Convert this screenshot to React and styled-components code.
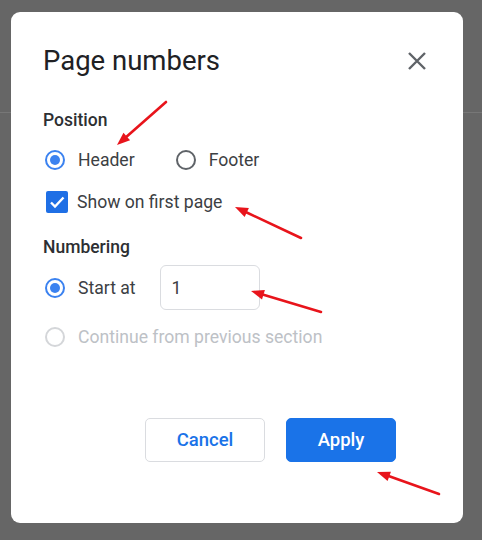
import React from "react";
import styled, { createGlobalStyle } from "styled-components";

const GlobalStyle = createGlobalStyle`
  html, body { margin: 0; padding: 0; }
  body {
    width: 482px;
    height: 540px;
    overflow: hidden;
    background: linear-gradient(#666666 0 112px, #777777 112px 113px, #666666 113px);
    font-family: Roboto, "Liberation Sans", Arial, sans-serif;
  }
`;

const Page = styled.div`
  position: relative;
  width: 482px;
  height: 540px;
  padding: 12px 0 0 11px;
  box-sizing: border-box;
`;

const Dialog = styled.div`
  width: 452px;
  height: 511px;
  box-sizing: border-box;
  background: #ffffff;
  border-radius: 9px;
  padding: 33px 34px 0 32px;
  display: flex;
  flex-direction: column;
`;

const TitleRow = styled.div`
  display: flex;
  align-items: center;
  justify-content: space-between;
  height: 32px;
`;

const Title = styled.h1`
  margin: 0;
  font-size: 27.5px;
  line-height: 32px;
  font-weight: 400;
  color: #202124;
`;

const CloseButton = styled.button`
  width: 24px;
  height: 24px;
  padding: 0;
  border: 0;
  background: none;
  display: flex;
  align-items: center;
  justify-content: center;
  color: #5f6368;
`;

const SectionLabel = styled.div`
  margin-top: ${(p) => p.$top}px;
  font-size: 17.5px;
  line-height: 24px;
  font-weight: 500;
  color: #2d2f32;
`;

const Row = styled.div`
  display: flex;
  align-items: center;
  margin-top: ${(p) => p.$top}px;
  min-height: 24px;
`;

const Option = styled.label`
  display: flex;
  align-items: center;
  gap: ${(p) => p.$gap || 13}px;
  margin-right: ${(p) => p.$space || 0}px;
  font-size: 17.6px;
  line-height: 24px;
  color: ${(p) => (p.$disabled ? "#bdc1c6" : "#3c4043")};
`;

const RadioCircle = styled.span`
  width: 20px;
  height: 20px;
  box-sizing: border-box;
  border-radius: 50%;
  border: 2px solid
    ${(p) => (p.$disabled ? "#d4d6d9" : p.$checked ? "#3b82f0" : "#5f6368")};
  display: flex;
  align-items: center;
  justify-content: center;
  margin-left: 2px;

  &::after {
    content: "";
    width: 10px;
    height: 10px;
    border-radius: 50%;
    background: #3b82f0;
    display: ${(p) => (p.$checked ? "block" : "none")};
  }
`;

const CheckBox = styled.span`
  width: 22px;
  height: 22px;
  border-radius: 2px;
  background: #1f6fe5;
  display: flex;
  align-items: center;
  justify-content: center;
  margin-left: 3px;
`;

const NumberInput = styled.div`
  width: 100px;
  height: 45px;
  box-sizing: border-box;
  border: 1px solid #dadce0;
  border-radius: 6px;
  margin-left: 24px;
  padding-left: 11px;
  display: flex;
  align-items: center;
  font-size: 17.6px;
  color: #3c4043;
`;

const Actions = styled.div`
  display: flex;
  gap: 21px;
  margin-top: 69px;
  padding-left: 102px;
`;

const Button = styled.button`
  height: 44px;
  width: ${(p) => p.$w}px;
  box-sizing: border-box;
  border-radius: 5px;
  font-family: Roboto, "Liberation Sans", Arial, sans-serif;
  font-size: 18.5px;
  font-weight: 500;
  border: 1px solid ${(p) => (p.$primary ? "#1a73e8" : "#dadce0")};
  background: ${(p) => (p.$primary ? "#1a73e8" : "#ffffff")};
  color: ${(p) => (p.$primary ? "#ffffff" : "#1a73e8")};
  padding: 0;
`;

const Annotations = styled.svg`
  position: absolute;
  left: 0;
  top: 0;
  pointer-events: none;
`;

function Arrow({ x1, y1, x2, y2 }) {
  const ang = Math.atan2(y2 - y1, x2 - x1);
  const len = 13;
  const half = 5;
  const bx = x2 - len * Math.cos(ang);
  const by = y2 - len * Math.sin(ang);
  const px = -Math.sin(ang) * half;
  const py = Math.cos(ang) * half;
  return (
    <g>
      <line x1={x1} y1={y1} x2={bx} y2={by} stroke="#e8141b" strokeWidth="2.6" strokeLinecap="round" />
      <polygon
        points={`${x2},${y2} ${bx + px},${by + py} ${bx - px},${by - py}`}
        fill="#e8141b"
      />
    </g>
  );
}

export default function App() {
  return (
    <>
      <GlobalStyle />
      <Page>
        <Dialog>
          <TitleRow>
            <Title>Page numbers</Title>
            <CloseButton aria-label="Close">
              <svg width="20" height="20" viewBox="0 0 20 20">
                <path d="M2 2 L18 18 M18 2 L2 18" stroke="#5f6368" strokeWidth="2.4" />
              </svg>
            </CloseButton>
          </TitleRow>

          <SectionLabel $top={31}>Position</SectionLabel>
          <Row $top={16}>
            <Option $space={39}>
              <RadioCircle $checked />
              Header
            </Option>
            <Option>
              <RadioCircle />
              Footer
            </Option>
          </Row>
          <Row $top={18}>
            <Option $gap={9}>
              <CheckBox>
                <svg width="18" height="18" viewBox="0 0 18 18">
                  <path d="M3 9.5 L7 13.5 L15.5 4.5" fill="none" stroke="#fff" strokeWidth="2.4" />
                </svg>
              </CheckBox>
              Show on first page
            </Option>
          </Row>

          <SectionLabel $top={21}>Numbering</SectionLabel>
          <Row $top={6}>
            <Option>
              <RadioCircle $checked />
              Start at
            </Option>
            <NumberInput>1</NumberInput>
          </Row>
          <Row $top={15}>
            <Option $disabled>
              <RadioCircle $disabled />
              Continue from previous section
            </Option>
          </Row>

          <Actions>
            <Button $w={120}>Cancel</Button>
            <Button $w={110} $primary>Apply</Button>
          </Actions>
        </Dialog>

        <Annotations width="482" height="540" viewBox="0 0 482 540">
          <Arrow x1={166} y1={102} x2={117} y2={145} />
          <Arrow x1={301} y1={238} x2={235} y2={207} />
          <Arrow x1={321} y1={312} x2={251} y2={291} />
          <Arrow x1={439} y1={494} x2={377} y2={472} />
        </Annotations>
      </Page>
    </>
  );
}
